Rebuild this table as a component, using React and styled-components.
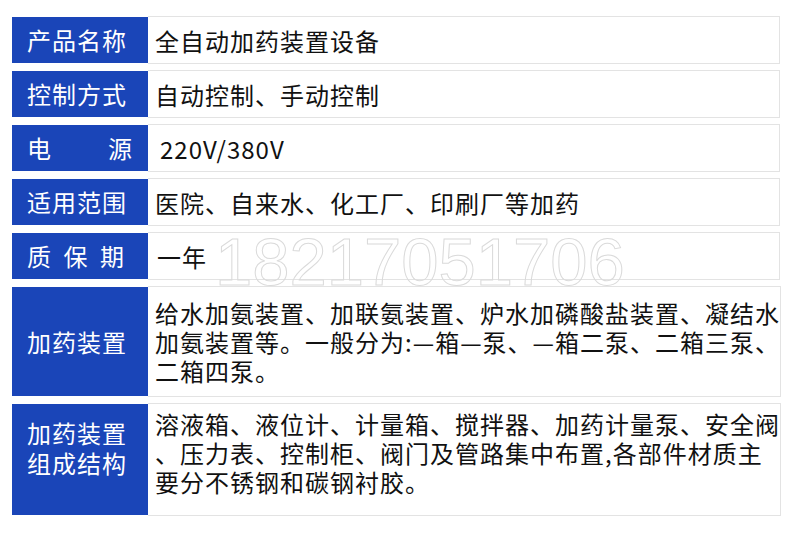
import styled, { createGlobalStyle } from "styled-components";

// 표 스타일 페이지
const Global = createGlobalStyle`
  html, body {
    margin: 0;
    padding: 0;
    background: #ffffff;
  }
  body {
    font-family: "Noto Sans CJK SC", "Noto Sans", sans-serif;
  }
`;

const Page = styled.div`
  position: relative;
  width: 790px;
  height: 535px;
  box-sizing: border-box;
  padding: 16px 10px 0 12px;
  display: flex;
  flex-direction: column;
  gap: 6px;
  overflow: hidden;
`;

const Row = styled.div`
  display: grid;
  grid-template-columns: 136px 1fr;
  height: ${(props) => props.h}px;
`;

const Label = styled.div`
  margin: 1px 0;
  background: #1a45b8;
  color: #ffffff;
  font-size: 24px;
  letter-spacing: ${(props) => props.spacing || 1}px;
  line-height: 30px;
  display: flex;
  flex-direction: column;
  justify-content: center;
  padding: 0 0 ${(props) => props.lift || 0}px 15px;
  white-space: nowrap;
`;

const Value = styled.div`
  border: 1px solid #e3e3e3;
  border-left: none;
  color: #111111;
  font-size: 24px;
  letter-spacing: 1px;
  line-height: 29px;
  display: flex;
  flex-direction: column;
  justify-content: center;
  padding: 0 0 ${(props) => props.lift || 0}px ${(props) => props.pl || 7}px;
  white-space: nowrap;
`;

const Line = styled.span`
  display: block;
`;

// 워터마크 (내용 위에 겹침)
const Watermark = styled.div`
  position: absolute;
  left: 215px;
  top: 228px;
  font-family: "Liberation Sans", Arial, sans-serif;
  font-size: 67px;
  line-height: 1;
  color: transparent;
  -webkit-text-stroke: 1px #dadada;
  pointer-events: none;
`;

let rows = [
  { label: ["产品名称"], value: ["全自动加药装置设备"], h: 48 },
  { label: ["控制方式"], value: ["自动控制、手动控制"], h: 48 },
  { label: ["电源"], value: ["220V/380V"], h: 48, spacing: 57, pl: 12 },
  { label: ["适用范围"], value: ["医院、自来水、化工厂、印刷厂等加药"], h: 48 },
  { label: ["质保期"], value: ["一年"], h: 48, spacing: 12.5, pl: 9 },
  {
    label: ["加药装置"],
    value: [
      "给水加氨装置、加联氨装置、炉水加磷酸盐装置、凝结水",
      "加氨装置等。一般分为:—箱—泵、—箱二泵、二箱三泵、",
      "二箱四泵。",
    ],
    h: 111,
  },
  {
    label: ["加药装置", "组成结构"],
    value: [
      "溶液箱、液位计、计量箱、搅拌器、加药计量泵、安全阀",
      "、压力表、控制柜、阀门及管路集中布置,各部件材质主",
      "要分不锈钢和碳钢衬胶。",
    ],
    h: 113,
    labelLift: 24,
    valueLift: 14,
  },
];

function App() {
  return (
    <>
      <Global />
      <Page>
        {rows.map((r, i) => (
          <Row key={i} h={r.h}>
            <Label spacing={r.spacing} lift={r.labelLift}>
              {r.label.map((t) => (
                <Line key={t}>{t}</Line>
              ))}
            </Label>
            <Value pl={r.pl} lift={r.valueLift}>
              {r.value.map((t) => (
                <Line key={t}>{t}</Line>
              ))}
            </Value>
          </Row>
        ))}
        <Watermark>18217051706</Watermark>
      </Page>
    </>
  );
}

export default App;
